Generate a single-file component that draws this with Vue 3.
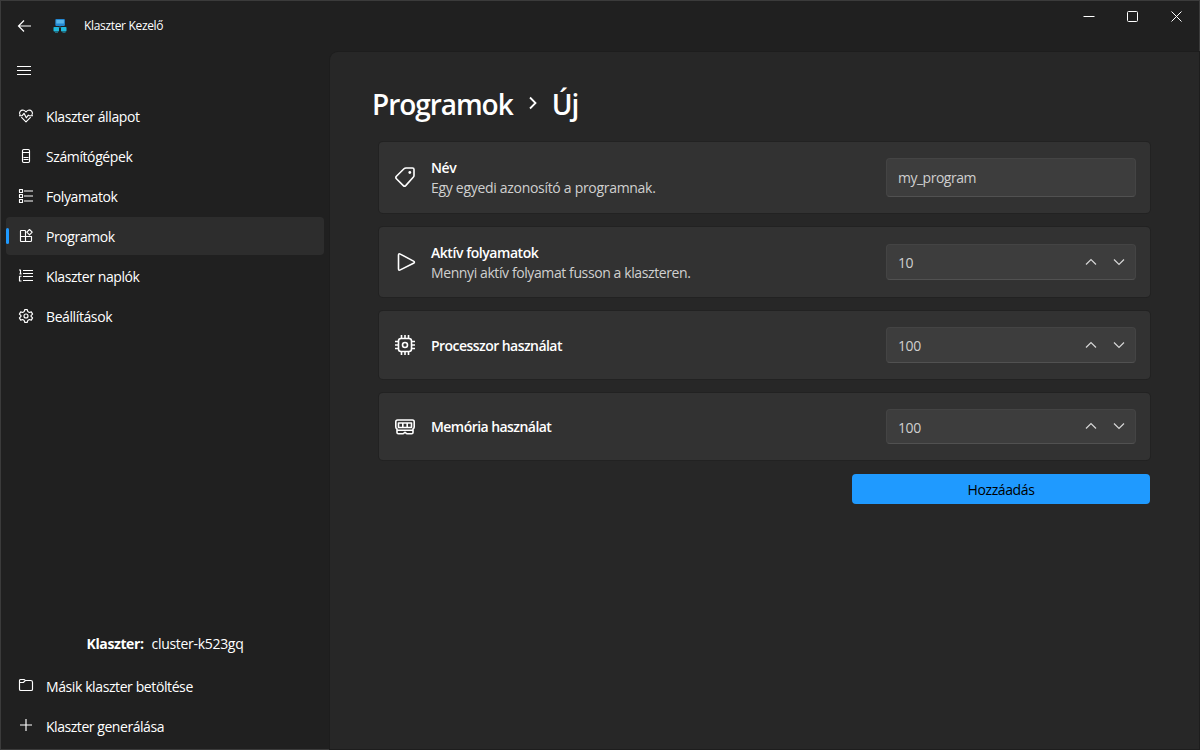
<script setup>
const nav = [
  { label: 'Klaszter állapot', icon: 'heart' },
  { label: 'Számítógépek', icon: 'server' },
  { label: 'Folyamatok', icon: 'tasks' },
  { label: 'Programok', icon: 'apps', active: true },
  { label: 'Klaszter naplók', icon: 'logs' },
  { label: 'Beállítások', icon: 'gear' },
]
const footer = [
  { label: 'Másik klaszter betöltése', icon: 'folder' },
  { label: 'Klaszter generálása', icon: 'plus' },
]
const cards = [
  { id: 'name', title: 'Név', text: 'Egy egyedi azonosító a programnak.', value: 'my_program', icon: 'tag' },
  { id: 'count', title: 'Aktív folyamatok', text: 'Mennyi aktív folyamat fusson a klaszteren.', value: '10', icon: 'play', spin: true },
  { id: 'cpu', title: 'Processzor használat', value: '100', icon: 'cpu', spin: true },
  { id: 'memory', title: 'Memória használat', value: '100', icon: 'ram', spin: true },
]
const shapes = {
  heart: 'M2.2 7.2C.2 4.2 3 1.5 5.7 2.2 6.8 2.5 7.5 3.3 8 4 8.5 3.3 9.2 2.5 10.3 2.2 13 1.5 15.8 4.2 13.8 7.2M3.3 9.2 8 13.8 12.7 9.2M1 7.7H4.2L6 5.3 8.3 9.8 10.3 7.2 11.2 7.7H15',
  server: 'M5.7 1.5H10.3Q11.5 1.5 11.5 2.7V13.3Q11.5 14.5 10.3 14.5H5.7Q4.5 14.5 4.5 13.3V2.7Q4.5 1.5 5.7 1.5ZM5 4.5H11M5.5 9.5H10.5M5.5 11.5H10.5',
  tasks: 'M1.5 1.5H4.5V4.5H1.5ZM1.5 6.5H4.5V9.5H1.5ZM1.5 11.5H4.5V14.5H1.5ZM6 3H15M6 8H15M6 13H15',
  apps: 'M7.5 2.5H3Q2.5 2.5 2.5 3V13Q2.5 13.5 3 13.5H12.5Q13.5 13.5 13.5 12.5V8.5H2.5M7.5 2.5V13.5M11.5 1.5 14.2 4.2 11.5 6.9 8.8 4.2Z',
  logs: 'M5 2.5H15M5 5.5H15M5 8.5H15M5 12.5H15M1 2H2.5V5.5M1.5 5.8H3.5M3.5 8.2H1.5V13H3.5',
  gear: 'M6.7 1.6 9.3 1.6 9.8 3.6 11.3 4.5 13.3 3.9 14.6 6.1 13.1 7.5V8.5L14.6 9.9 13.3 12.1 11.3 11.5 9.8 12.4 9.3 14.4H6.7L6.2 12.4 4.7 11.5 2.7 12.1 1.4 9.9 2.9 8.5V7.5L1.4 6.1 2.7 3.9 4.7 4.5 6.2 3.6ZM10 8A2 2 0 1 1 6 8A2 2 0 1 1 10 8Z',
  folder: 'M1.5 4V12.2Q1.5 13.5 2.8 13.5H13.2Q14.5 13.5 14.5 12.2V5.3Q14.5 3.5 12.7 3.5H7.3L6 2.5H2.5Q1.5 2.5 1.5 4ZM2 5.5H4.8Q5.5 5.5 6 4.8L7.3 3.5',
  plus: 'M8 2V14M2 8H14',
}
</script>

<template>
  <div class="window">
    <aside class="sidebar">
      <header class="brand">
        <svg class="back" viewBox="0 0 16 16"><path d="M15 8H2.5M8 2.5 2.5 8 8 13.5" /></svg>
        <svg class="logo" viewBox="0 0 16 16">
          <rect x="3.3" y="1" width="9.6" height="7" rx="1" fill="#2387d2" />
          <rect x="4.3" y="2" width="7.6" height="3.5" fill="#58b5e8" />
          <path d="M8 8V9M4 9.5H12" stroke="#1a536d" />
          <rect x="1.5" y="9" width="5.5" height="4.5" rx=".8" fill="#20b9dc" />
          <rect x="9" y="9" width="5.5" height="4.5" rx=".8" fill="#20b9dc" />
          <path d="M3 14.3H6M10.5 14.3H13.5" stroke="#267a96" />
        </svg>
        <span>Klaszter Kezelő</span>
      </header>
      <div class="menu">
        <svg viewBox="0 0 16 12"><path d="M1 1.5H15M1 5.5H15M1 9.5H15" /></svg>
      </div>
      <nav>
        <a v-for="n in nav" :key="n.icon" class="item" :class="[n.icon, { active: n.active }]">
          <svg viewBox="0 0 16 16"><path :d="shapes[n.icon]" /></svg>
          <span>{{ n.label }}</span>
        </a>
      </nav>
      <div class="spacer"></div>
      <p class="cluster"><b>Klaszter:</b><span>cluster-k523gq</span></p>
      <a v-for="n in footer" :key="n.icon" class="item" :class="n.icon">
        <svg viewBox="0 0 16 16"><path :d="shapes[n.icon]" /></svg>
        <span>{{ n.label }}</span>
      </a>
    </aside>

    <section class="right">
      <div class="controls">
        <svg viewBox="0 0 12 12"><path d="M.5 5.5H11.5" /></svg>
        <svg viewBox="0 0 12 12"><rect x=".5" y=".5" width="10" height="10" rx="1" /></svg>
        <svg viewBox="0 0 12 12"><path d="M.5 .5 10.5 10.5M10.5 .5 .5 10.5" /></svg>
      </div>
      <main>
        <h1>
          <span class="parent">Programok</span>
          <svg viewBox="0 0 10 14"><path d="M2 1.5 7.5 7 2 12.5" /></svg>
          <span class="current">Új</span>
        </h1>
        <div v-for="c in cards" :key="c.id" class="card" :class="c.id">
          <svg class="glyph" viewBox="0 0 24 24">
            <template v-if="c.icon === 'tag'">
              <path d="M13 3H19.5Q21 3 21 4.5V10.5Q21 11.5 20.2 12.3L12.7 20.6Q11.5 21.8 10.3 20.6L3.4 13.7Q2.2 12.5 3.4 11.3L11 3.8Q11.8 3 13 3Z" />
              <circle cx="16.8" cy="7.5" r="1.4" class="solid" />
            </template>
            <path v-else-if="c.icon === 'play'" d="M5.5 5.2V18.8Q5.5 20.8 7.3 19.9L20.5 13.2Q22.3 12.2 20.5 11.1L7.3 4.1Q5.5 3.2 5.5 5.2Z" />
            <template v-else-if="c.icon === 'cpu'">
              <rect x="5.5" y="5.5" width="13" height="13" rx="2.5" />
              <circle cx="12" cy="12" r="2.5" />
              <path d="M8.5 2V5M12 2V5M15.5 2V5M8.5 19V22M12 19V22M15.5 19V22M2 8.5H5M2 12H5M2 15.5H5M19 8.5H22M19 12H22M19 15.5H22" />
            </template>
            <path v-else d="M4.5 5H19.5Q21.2 5 21.2 6.7V12Q21.2 13.3 20 14V17.5Q20 18.8 18.7 18.8H14.3Q13.3 18.8 12.8 17.8Q12 17 11.2 17.8Q10.7 18.8 9.7 18.8H5.3Q4 18.8 4 17.5V14Q2.8 13.3 2.8 12V6.7Q2.8 5 4.5 5ZM5.5 8H18.5V12.5H5.5ZM9.8 8V12.5M14.2 8V12.5M4 15.3H20" />
          </svg>
          <div class="copy">
            <b>{{ c.title }}</b>
            <span v-if="c.text">{{ c.text }}</span>
          </div>
          <div class="field">
            <span>{{ c.value }}</span>
            <template v-if="c.spin">
              <svg viewBox="0 0 12 8"><path d="M1 6.5 6 1.5 11 6.5" /></svg>
              <svg viewBox="0 0 12 8"><path d="M1 1.5 6 6.5 11 1.5" /></svg>
            </template>
          </div>
        </div>
        <button>Hozzáadás</button>
      </main>
    </section>
  </div>
</template>

<style>
body { background: #202020; overflow: hidden; }
</style>

<style scoped>
* { box-sizing: border-box; }
.window { width: 1200px; height: 750px; display: flex; border: 1px solid #3b3b3b; background: #202020; color: #fff; font: 14px/20px "Open Sans", "Noto Sans", sans-serif; letter-spacing: -.4px; white-space: nowrap; }
svg { display: block; flex: none; fill: none; stroke: #fff; }
.sidebar { width: 329px; display: flex; flex-direction: column; padding: 0 6px 2px 5px; }
.brand { height: 49px; display: flex; align-items: center; padding-left: 10px; font-size: 12px; letter-spacing: -.33px; }
.brand span { padding-top: 1px; }
.back { width: 16px; height: 16px; margin-right: 20px; stroke-width: 1.2; }
.logo { width: 16px; height: 16px; margin-right: 16px; stroke: none; }
.menu { height: 47px; padding: 15px 0 0 10px; }
.menu svg { width: 16px; height: 12px; stroke-width: 1; }
.item { height: 38px; margin-bottom: 2px; display: flex; align-items: center; padding: 0 0 0 12px; border-radius: 4px; position: relative; }
.item svg { width: 16px; height: 16px; margin-right: 12px; margin-top: 0; stroke-width: 1.15; stroke-linejoin: round; }
.item.plus svg, .item.folder svg { margin-top: -2px; }
.item span { padding-top: 2px; }
.item.plus { letter-spacing: -.45px; }
nav .item { top: 0; }
nav .item svg { margin-top: -1px; }
nav .item.active { background: #2d2d2d; }
.active::before { content: ""; position: absolute; left: 0; top: 11px; width: 3px; height: 16px; border-radius: 2px; background: #1f9aff; }
.spacer { flex: 1; }
.cluster { margin: 0 0 13px; display: flex; justify-content: center; gap: 8px; }
.cluster span { letter-spacing: -.3px; }
.right { flex: 1; display: flex; flex-direction: column; }
.controls { height: 51px; display: flex; justify-content: flex-end; gap: 32px; padding: 10px 16px 0 0; }
.controls svg { width: 12px; height: 12px; stroke-width: 1; }
main { flex: 1; background: #272727; border-radius: 8px 0 0; box-shadow: 0 0 0 1px #1d1d1d; padding: 32px 49px 0; display: flex; flex-direction: column; }
h1 { height: 40px; margin: 0 0 18px -7px; display: flex; align-items: center; font-size: 28px; line-height: 40px; font-weight: 600; letter-spacing: -1.05px; }
h1 svg { width: 10px; height: 14px; margin: -3px 14px 0 15px; stroke-width: 1.8; }
.card { height: 71px; margin-bottom: 14px; display: flex; align-items: center; padding: 0 14px; border-radius: 4px; background: #323232; box-shadow: 0 0 0 1px #222; }
.count { height: 70px; }
.cpu { height: 68px; }
.memory { height: 67px; }
.glyph { width: 24px; height: 24px; margin-right: 14px; stroke-width: 1.6; stroke-linejoin: round; margin-top: -1px; }
.memory .glyph { margin-top: 1px; }
.solid { fill: #fff; stroke: none; }
.copy { flex: 1; display: flex; flex-direction: column; padding-top: 1px; }
.count .copy { padding-top: 2px; }
.copy b { font-weight: 600; letter-spacing: -.55px; }
.name .copy b { letter-spacing: -.4px; }
.count .copy b { letter-spacing: -.45px; }
.copy span { color: #d0d0d0; }
.name .copy span { letter-spacing: -.3px; }
.field { width: 250px; height: 36px; display: flex; align-items: center; gap: 16px; padding: 2px 10px 0 11px; border: 1px solid #444; border-bottom-color: #515151; border-radius: 4px; background: #3d3d3d; color: #cfcfcf; }
.name .field { height: 39px; padding-top: 0; letter-spacing: -.5px; }
.memory .field { height: 35px; }
.field span { flex: 1; }
.field svg { width: 12px; height: 8px; stroke: #d6d6d6; stroke-width: 1.2; margin-top: -3px; }
button { align-self: flex-end; width: 298px; height: 30px; border: 0; border-radius: 4px; background: #1f9aff; color: #000; font: inherit; letter-spacing: inherit; padding: 2px 0 0; }
</style>
